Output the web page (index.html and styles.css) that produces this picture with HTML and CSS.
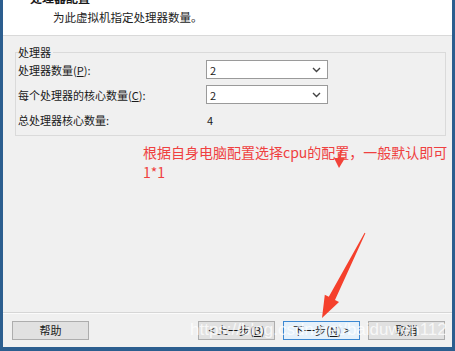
FILE: index.html
```html
<!DOCTYPE html>
<html lang="zh-CN">
<head>
<meta charset="utf-8">
<title>处理器配置</title>
<link rel="stylesheet" href="styles.css">
</head>
<body>
<div class="window">
  <header class="head">
    <div class="title">处理器配置</div>
    <div class="subtitle">为此虚拟机指定处理器数量。</div>
  </header>
  <main class="content">
    <section class="group">
      <div class="group-title">处理器</div>
      <div class="rows">
        <div class="label">处理器数量(<u>P</u>):</div>
        <div class="select"><span>2</span><svg class="chev" width="9" height="6" viewBox="0 0 9 6"><path d="M1 1l3.5 3.5L8 1" fill="none" stroke="#444" stroke-width="1.4"/></svg></div>
        <div class="label">每个处理器的核心数量(<u>C</u>):</div>
        <div class="select"><span>2</span><svg class="chev" width="9" height="6" viewBox="0 0 9 6"><path d="M1 1l3.5 3.5L8 1" fill="none" stroke="#444" stroke-width="1.4"/></svg></div>
        <div class="label">总处理器核心数量:</div>
        <div class="value">4</div>
      </div>
    </section>
    <div class="note">根据自身电脑配置选择cpu的配置，一般默认即可<br>1*1</div>
  </main>
  <footer class="buttons">
    <button class="btn">帮助</button>
    <div class="spacer"></div>
    <button class="btn">&lt; 上一步(<u>B</u>)</button>
    <button class="btn primary">下一步(<u>N</u>) &gt;</button>
    <button class="btn">取消</button>
  </footer>
  <svg class="arrows" width="455" height="351" viewBox="0 0 455 351">
    <path d="M341 150 L339.5 160" stroke="#f2433a" stroke-width="2" fill="none"/>
    <polygon points="334,158 345,158 339,168" fill="#f2433a"/>
    <polygon points="365.4,233.2 335.0,300.0 339.0,302.0 322,318 324.8,294.8 328.8,296.8 364.6,232.8" fill="#f5402c"/>
  </svg>
  <div class="watermark">https://blog.csdn.net/baiduwen112</div>
</div>
</body>
</html>
```
FILE: styles.css
```css
* { box-sizing: border-box; }
html, body { margin: 0; padding: 0; }
body {
  width: 455px;
  height: 351px;
  overflow: hidden;
  font-family: "Noto Sans CJK SC", "Noto Sans", sans-serif;
  font-size: 11px;
  color: #1a1a1a;
  background: #f0f0f0;
}
.window {
  position: relative;
  width: 455px;
  height: 351px;
  border-left: 3px solid #2c5e8f;
  border-right: 3px solid #2c5e8f;
  border-bottom: 4px solid #2c5e8f;
  display: flex;
  flex-direction: column;
  background: #f0f0f0;
  overflow: hidden;
}
.head {
  height: 36px;
  background: #fff;
  border-bottom: 1px solid #d9d9d9;
  flex: none;
}
.title {
  font-weight: bold;
  font-size: 12px;
  line-height: 14px;
  margin-top: -9px;
  padding-left: 27px;
}
.subtitle {
  font-size: 11.5px;
  line-height: 14px;
  margin-top: 5px;
  padding-left: 50px;
  color: #222;
}
.content {
  flex: 1;
  display: flex;
  flex-direction: column;
}
.group {
  margin: 16px 6px 0 12px;
  border: 1px solid #dadada;
  padding: 0 4px 6px 2px;
}
.group-title {
  margin-top: -8px;
  line-height: 14px;
  background: #f0f0f0;
  width: fit-content;
  padding-right: 2px;
}
.rows {
  margin-top: 1px;
  display: grid;
  grid-template-columns: 188px 122px;
  grid-auto-rows: 19px;
  row-gap: 6px;
  align-items: center;
}
.label { line-height: 14px; }
.select {
  height: 19px;
  background: #fff;
  border: 1px solid #9a9a9a;
  display: flex;
  align-items: center;
  justify-content: space-between;
  padding: 0 6px 0 3px;
}
.value { padding-left: 1px; }
.note {
  margin: 6px 0 0 140px;
  font-size: 14px;
  line-height: 20px;
  color: #ef4040;
}
.buttons {
  flex: none;
  height: 35px;
  border-top: 1px solid #d6d6d6;
  box-shadow: inset 0 1px 0 #fbfbfb;
  display: flex;
  align-items: flex-start;
  padding: 8px 7px 0 9px;
  gap: 8px;
}
.spacer { flex: 1; }
.btn {
  width: 77px;
  height: 19px;
  padding: 0;
  font-family: "Noto Sans CJK SC", "Noto Sans", sans-serif;
  font-size: 11px;
  line-height: 17px;
  color: #1a1a1a;
  background: #e1e1e1;
  border: 1px solid #adadad;
}
.btn.primary {
  background: #e5f1fb;
  border-color: #3c88d2;
}
.arrows {
  position: absolute;
  left: -3px;
  top: 0;
  pointer-events: none;
}
.watermark {
  position: absolute;
  left: 187px;
  top: 320px;
  font-family: "Liberation Sans", Arial, sans-serif;
  font-size: 17px;
  color: rgba(255, 255, 255, 0.75);
  white-space: nowrap;
  pointer-events: none;
}
```
